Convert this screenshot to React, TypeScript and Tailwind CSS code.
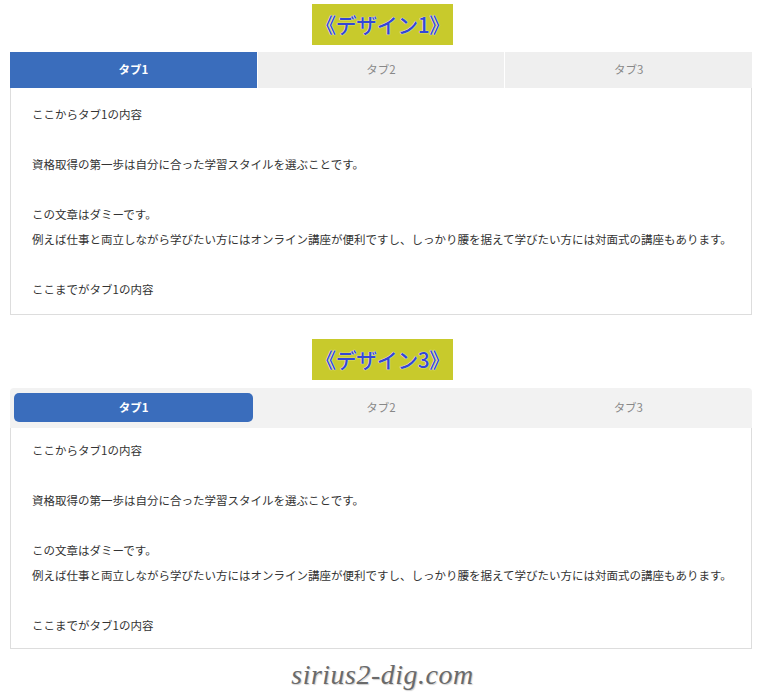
const jp = "font-['Noto_Sans_CJK_JP','Noto_Sans',sans-serif]";

const lines = [
  "ここからタブ1の内容",
  "",
  "資格取得の第一歩は自分に合った学習スタイルを選ぶことです。",
  "",
  "この文章はダミーです。",
  "例えば仕事と両立しながら学びたい方にはオンライン講座が便利ですし、しっかり腰を据えて学びたい方には対面式の講座もあります。",
  "",
  "ここまでがタブ1の内容",
];

function Title({ label }: { label: string }) {
  return (
    <div className="flex justify-center">
      <div
        className={`bg-[#c8ca2c] px-[3px] h-[41px] flex items-center text-[21px] font-medium tracking-[-0.5px] text-[#3447d4] ${jp}`}
        style={{ textShadow: "0 0 1px #fff, 0 0 1px #fff" }}
      >
        《デザイン{label}》
      </div>
    </div>
  );
}

function Body({ py }: { py: string }) {
  return (
    <div className={`border border-[#dddddd] border-t-0 bg-white px-[21px] ${py} text-[11.5px] leading-[25px] text-[#333] ${jp}`}>
      {lines.map((l, i) => (
        <div key={i} className="h-[25px] whitespace-nowrap">
          {l}
        </div>
      ))}
    </div>
  );
}

function Design1() {
  return (
    <div className="ml-[10px] mr-[13px]">
      <div className="flex gap-[1px] h-[36px] text-[11.5px]">
        <div className={`flex-1 bg-[#3a6dbc] text-white font-bold flex items-center justify-center ${jp}`}>タブ1</div>
        <div className={`flex-1 bg-[#efefef] text-[#888] flex items-center justify-center ${jp}`}>タブ2</div>
        <div className={`flex-1 bg-[#efefef] text-[#888] flex items-center justify-center ${jp}`}>タブ3</div>
      </div>
      <Body py="pt-[14px] pb-[12px]" />
    </div>
  );
}

function Design3() {
  return (
    <div className="ml-[10px] mr-[13px]">
      <div className="flex h-[40px] bg-[#f2f2f2] rounded-t-[4px] pt-[5px] pb-[6px] text-[11.5px]">
        <div className="w-1/3 px-[4px] flex">
          <div className={`flex-1 bg-[#3a6dbc] text-white font-bold rounded-[5px] flex items-center justify-center ${jp}`}>タブ1</div>
        </div>
        <div className={`w-1/3 text-[#888] flex items-center justify-center ${jp}`}>タブ2</div>
        <div className={`w-1/3 text-[#888] flex items-center justify-center ${jp}`}>タブ3</div>
      </div>
      <Body py="py-[10px]" />
    </div>
  );
}

export default function App() {
  return (
    <div className="w-[765px] h-[698px] bg-white overflow-hidden">
      <div className="pt-[4px]">
        <Title label="1" />
      </div>
      <div className="mt-[7px]">
        <Design1 />
      </div>
      <div className="mt-[24px]">
        <Title label="3" />
      </div>
      <div className="mt-[8px]">
        <Design3 />
      </div>
      <div className="flex justify-center mt-[5px]">
        <span
          className="font-['Liberation_Serif',serif] italic font-normal text-[28px] text-[#6a6a6a] tracking-[0.5px]"
          style={{ textShadow: "1px 1px 1px #d0d0d0" }}
        >
          sirius2-dig.com
        </span>
      </div>
    </div>
  );
}
